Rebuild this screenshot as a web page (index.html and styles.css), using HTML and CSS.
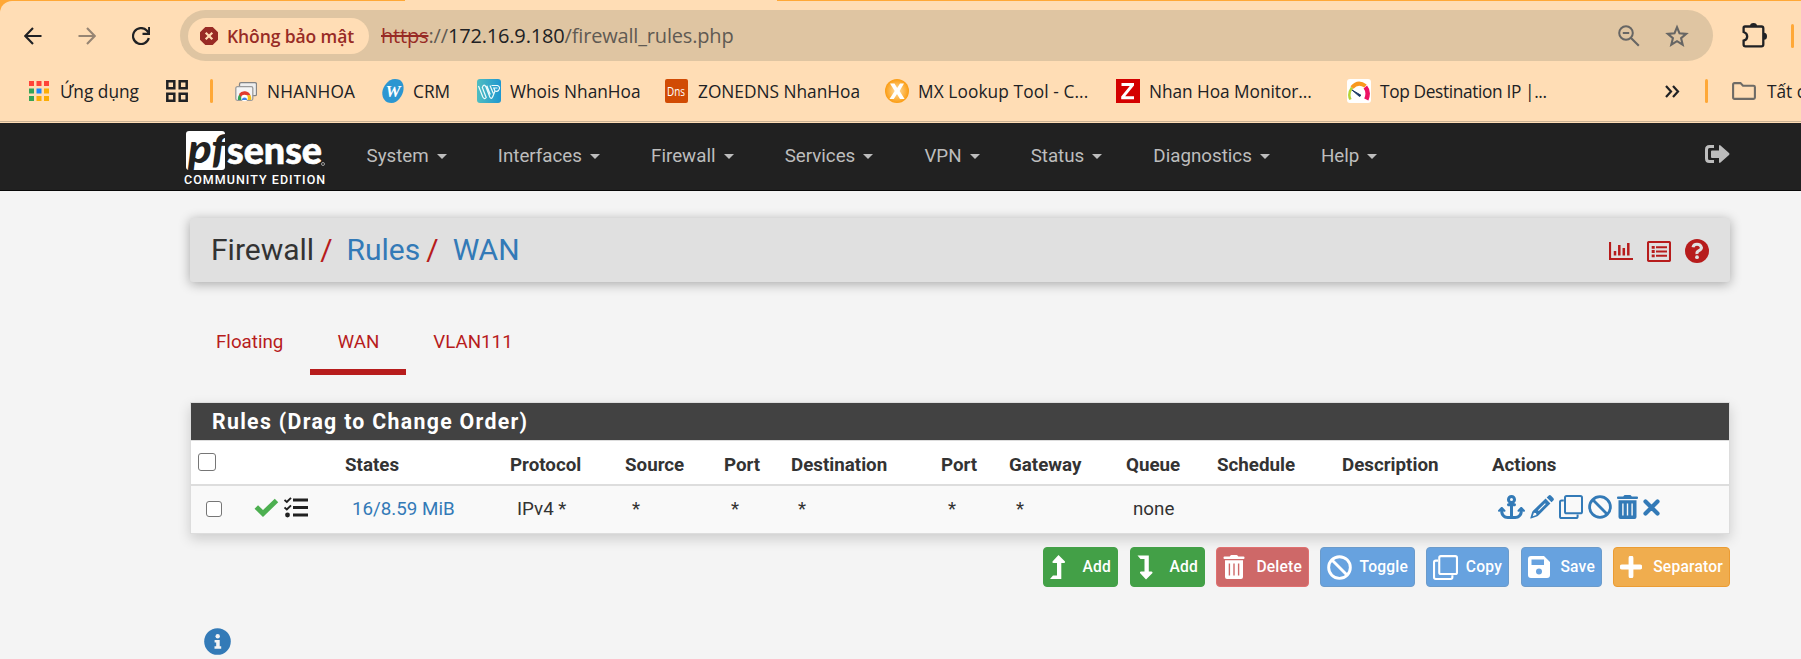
FILE: index.html
```html
<!DOCTYPE html>
<html lang="vi">
<head>
<meta charset="utf-8">
<title>Firewall: Rules: WAN</title>
<link rel="stylesheet" href="styles.css">
</head>
<body>
<svg class="defs" width="0" height="0" aria-hidden="true">
  <symbol id="ban" viewBox="0 0 24 24"><circle cx="12" cy="12" r="10.4" fill="none" stroke="currentColor" stroke-width="2.8"/><path d="M4.8 4.8 19.2 19.2" stroke="currentColor" stroke-width="2.8"/></symbol>
  <symbol id="clone" viewBox="0 0 24 24"><rect x="6" y="1.1" width="17" height="17.2" rx="1.6" fill="none" stroke="currentColor" stroke-width="2"/><path d="M4.8 5.4H2.6A1.6 1.6 0 0 0 1 7v14.4A1.6 1.6 0 0 0 2.600 23H17a1.600 1.600 0 0 0 1.600-1.600V19.500" fill="none" stroke="currentColor" stroke-width="2"/></symbol>
  <symbol id="trash" viewBox="0 0 21 24"><path fill="currentColor" fill-rule="evenodd" d="M1 1.500H6.200L7.200 .3Q7.500 0 8 0h5q.5 0 .8 .3l1 1.200H20q1 0 1 1v.5q0 1-1 1H1Q0 4 0 3v-.5q0-1 1-1zM1.500 5.300h18V22q0 2-2 2h-14q-2 0-2-2zM5.200 8.500v12h1.400v-12zM9.800 8.500v12h1.400v-12zM14.400 8.500v12h1.400v-12z"/></symbol>
</svg>
<div class="browser">
  <div class="tabstrip"><div class="active-tab"></div></div>
  <div class="toolbar">
    <svg class="nav-ico" viewBox="0 0 18 18"><path d="M17.500 9H1.500M9 1 1.300 9 9 17" fill="none" stroke="#202124" stroke-width="2.100"/></svg>
    <svg class="nav-ico" viewBox="0 0 18 18"><path d="M.5 9h16M9 1l7.700 8L9 17" fill="none" stroke="#978573" stroke-width="2.100"/></svg>
    <svg class="nav-ico" viewBox="0 0 18 18"><path d="M16.800 11A8 8 0 1 1 14.800 3.500L16.500 5.500" fill="none" stroke="#202124" stroke-width="2.200"/><path d="M17.200 0v6.800H10.500" fill="none" stroke="#202124" stroke-width="2.200"/></svg>
    <div class="omnibox">
      <div class="chip"><svg width="18" height="18" viewBox="0 0 18 18"><path d="M5.300 0h7.400L18 5.300v7.400L12.700 18H5.300L0 12.700V5.300z" fill="#982b25"/><path d="M5.700 5.700l6.600 6.600M12.300 5.700l-6.600 6.600" stroke="#ffdcb4" stroke-width="2.200"/></svg><span>Không bảo mật</span></div>
      <div class="url"><s>https</s>://<b>172.16.9.180</b>/firewall_rules.php</div>
      <svg class="o-zoom" viewBox="0 0 22 22"><circle cx="8" cy="8" r="6.800" fill="none" stroke="#676664" stroke-width="2"/><path d="M13 13l7.800 7.800M4.800 8h6.400" stroke="#676664" stroke-width="2.100"/></svg>
      <svg class="o-star" viewBox="0 0 24 24"><path d="M12 3.200 14.500 9.300 21.200 9.900 16.100 14.200 17.700 20.700 12 17.200 6.300 20.700 7.900 14.200 2.800 9.900 9.500 9.300z" fill="none" stroke="#676664" stroke-width="2.100"/></svg>
    </div>
    <svg class="puzzle" viewBox="0 0 25 25"><path d="M3 3.500H19.500Q21.300 3.500 21.300 5.300V21.600Q21.300 23.300 19.500 23.300H3.500Q1.600 23.300 1.600 21.500V17.700Q5.200 16.600 5.200 13.400T1.600 9V5Q1.600 3.500 3 3.500z" fill="none" stroke="#202124" stroke-width="2.300"/><path d="M8 3a3.500 3 0 0 1 7 0zM22 9.700a3 3.500 0 0 1 0 7z" fill="#202124"/></svg>
    <i class="sep"></i>
  </div>
  <div class="bookmarks">
    <div class="bm apps"><svg width="20" height="20" viewBox="0 0 20 20"><path fill="#ff4338" d="M0 0h5v5H0zM7.500 0h5v5h-5zM15 0h5v5h-5z"/><path fill="#34a457" d="M0 7.500h5v5H0zM0 15h5v5H0z"/><path fill="#1a86fa" d="M7.500 7.500h5v5h-5z"/><path fill="#fcad05" d="M15 7.500h5v5h-5zM7.500 15h5v5h-5zM15 15h5v5h-5z"/></svg><span>Ứng dụng</span></div>
    <div class="bm"><svg width="22" height="22" viewBox="0 0 22 22"><path d="M1.300 1.300h7v7h-7zM13.700 1.300h7v7h-7zM1.300 13.700h7v7h-7zM13.700 13.700h7v7h-7z" fill="none" stroke="#202124" stroke-width="2.500"/></svg></div>
    <div class="bm"><i class="sep"></i></div>
    <div class="bm t-nh"><svg width="22" height="22" viewBox="0 0 22 22"><rect x="4.500" y="2.700" width="17" height="13" rx="1.500" fill="#eee" stroke="#848484" stroke-width="1.300"/><rect x=".8" y="6.700" width="17" height="13.600" rx="1.500" fill="#f5f5f5" stroke="#9b9b9b" stroke-width="1.300"/><path d="M3 20a6.500 6.500 0 0 1 2-6l4.300 6z" fill="#33a354"/><path d="M4 14a6.500 6.500 0 0 1 11.500 1.500H9.500L8 20z" fill="#e23b2e"/><path d="M9.500 15.300H15.500A6.500 6.500 0 0 1 16 20H9z" fill="#fac116"/><circle cx="9.500" cy="18" r="3.300" fill="#fff"/><path d="M6.900 20a2.600 2.600 0 1 1 5.200 0z" fill="#3f82ee"/></svg><span>NHANHOA</span></div>
    <div class="bm t-crm"><svg width="22" height="24" viewBox="0 0 22 24"><path d="M13 0C20 0 22 5 21.500 10.500S16 24 9.500 24 0 19 .3 13.500 6 0 13 0z" fill="#2b96d1"/><text x="11" y="18" text-anchor="middle" class="w">W</text></svg><span>CRM</span></div>
    <div class="bm t-who"><svg width="24" height="24" viewBox="0 0 24 24"><defs><linearGradient id="g"><stop stop-color="#4fbdc0"/><stop offset="1" stop-color="#1f97d0"/></linearGradient></defs><rect width="24" height="24" rx="3" fill="url(#g)"/><path d="M1.500 7 5.800 18Q7.500 21 9.200 18.500L5.300 8.500Q7 4 9 8L12.800 18Q14.500 21 15.800 17.500L18 12M9.800 6.800 13.300 15.500M13 6.500 16.300 14.500M14.500 6.500H20.500Q24 8 21.500 11.500Q20 13 18 12L16.800 9H20.500" fill="none" stroke="#f0fbfc" stroke-width="1.200"/></svg><span>Whois NhanHoa</span></div>
    <div class="bm t-dns"><svg width="23" height="24" viewBox="0 0 23 24"><rect width="23" height="24" rx="2" fill="#d14b04"/><text x="2" y="16.500" textLength="18" lengthAdjust="spacingAndGlyphs" class="d">Dns</text></svg><span>ZONEDNS NhanHoa</span></div>
    <div class="bm t-mx"><svg width="24" height="24" viewBox="0 0 24 24"><defs><radialGradient id="o"><stop stop-color="#ffe0a8"/><stop offset="1" stop-color="#fb9c12"/></radialGradient></defs><circle cx="12" cy="12" r="12" fill="url(#o)"/><path d="M5 4.500h4.500l2.700 4.500 2.800-4.500h4L14.600 12l5 8H15l-3-5-3.200 5H4.500l5.200-8z" fill="#fff"/></svg><span>MX Lookup Tool - C...</span></div>
    <div class="bm t-nm"><svg width="24" height="24" viewBox="0 0 24 24"><path fill="#d40000" d="M0 0h24v24H0z"/><path d="M5.500 4H18v2.600L9.200 17.300H18V20.300H5.200V17.600L13.800 7H5.500z" fill="#fff"/></svg><span>Nhan Hoa Monitor...</span></div>
    <div class="bm t-top"><svg width="24" height="24" viewBox="0 0 24 24"><rect width="24" height="24" rx="3" fill="#fff"/><path d="M3.500 20.500Q.5 15 5 8.500" fill="none" stroke="#b4d335" stroke-width="2.500"/><path d="M5 8.500Q11 1.500 18.500 7" fill="none" stroke="#f9981d" stroke-width="4"/><path d="M18.300 8Q22.500 13 19.300 20.500" fill="none" stroke="#ed1164" stroke-width="4.500"/><path d="M5 11 12.500 17.500 14 16.300z" fill="#1b3a66" stroke="#1b3a66"/></svg><span>Top Destination IP |...</span></div>
    <div class="bm"><svg width="15" height="13" viewBox="0 0 15 13"><path d="M1 1l5 5.500L1 12M8 1l5 5.500L8 12" fill="none" stroke="#202124" stroke-width="2.200"/></svg></div>
    <div class="bm"><i class="sep"></i></div>
    <div class="bm t-all"><svg width="24" height="18" viewBox="0 0 24 18"><path d="M1.100 2.500Q1.100 1.100 2.500 1.100H8.500L11 3.700H21.500Q22.900 3.700 22.900 5V15.500Q22.900 16.900 21.500 16.900H2.500Q1.100 16.900 1.100 15.500z" fill="none" stroke="#6e6b66" stroke-width="2.100"/></svg><span>Tất cả</span></div>
  </div>
</div>
<nav class="navbar">
  <div class="brand">
    <svg width="142" height="42" viewBox="0 0 142 42"><defs><clipPath id="c"><rect x="2" y="2" width="39" height="39" rx="3"/></clipPath></defs><rect x="2" y="2" width="39" height="39" rx="3" fill="#fff"/><g clip-path="url(#c)"><text x="4" y="34" class="pf" textLength="38" lengthAdjust="spacingAndGlyphs">pf</text></g><text x="43" y="34.500" class="sense" textLength="95" lengthAdjust="spacingAndGlyphs">sense</text><circle cx="139" cy="35" r="1.500" fill="none" stroke="#bbb" stroke-width=".8"/></svg>
    <span>COMMUNITY EDITION</span>
  </div>
  <ul class="menu"><li>System</li><li>Interfaces</li><li>Firewall</li><li>Services</li><li>VPN</li><li>Status</li><li>Diagnostics</li><li>Help</li></ul>
  <svg class="logout" viewBox="0 0 25 18"><path d="M9 1.500H4.500Q1.500 1.500 1.500 4.500v9q0 3 3 3H9" fill="none" stroke="#bdbdbd" stroke-width="3"/><path d="M7 5.500H14V.8Q14.500-.4 15.500.4L24 8Q24.900 9 24 10L15.500 17.600Q14.500 18.400 14 17.200V13H7Q6 13 6 12V6.500Q6 5.500 7 5.500z" fill="#bdbdbd"/></svg>
</nav>
<main class="page">
  <header class="crumbs">
    <h1><span>Firewall</span><em>/</em><a>Rules</a><em>/</em><a>WAN</a></h1>
    <div class="tools">
      <svg width="24" height="18" viewBox="0 0 24 18"><path d="M1 0v17H24" fill="none" stroke="#b71c1c" stroke-width="2.200"/><path d="M6 13.500V9M10.300 13.500V3M14.800 13.500V6M19.300 13.500V1" stroke="#b71c1c" stroke-width="2.500"/></svg>
      <svg width="24" height="21" viewBox="0 0 24 21"><rect x="1" y="1" width="22" height="19" rx="1" fill="none" stroke="#b71c1c" stroke-width="2.100"/><path d="M9 6.300h11M9 10.500h11M9 14.800h11" stroke="#b71c1c" stroke-width="2"/><path d="M4.700 6.300h3M4.700 10.500h3M4.700 14.800h3" stroke="#b71c1c" stroke-width="2.800"/></svg>
      <svg width="24" height="24" viewBox="0 0 24 24"><circle cx="12" cy="12" r="12" fill="#b71c1c"/><path d="M8 8.300Q8.500 5.300 12 5.300T16.500 8.600Q16.500 10.500 14 11.700T12 15" fill="none" stroke="#e0e0e0" stroke-width="3"/><circle cx="12" cy="18.200" r="1.900" fill="#e0e0e0"/></svg>
    </div>
  </header>
  <ul class="tabs"><li>Floating</li><li class="on">WAN</li><li>VLAN111</li></ul>
  <section class="panel">
    <h2>Rules (Drag to Change Order)</h2>
    <table>
      <colgroup><col class="w49"><col class="w97"><col class="w165"><col class="w115"><col class="w99"><col class="w67"><col class="w150"><col class="w68"><col class="w117"><col class="w91"><col class="w125"><col class="w150"><col></colgroup>
      <thead><tr><th><i class="box big"></i></th><th></th><th>States</th><th>Protocol</th><th>Source</th><th>Port</th><th>Destination</th><th>Port</th><th>Gateway</th><th>Queue</th><th>Schedule</th><th>Description</th><th>Actions</th></tr></thead>
      <tbody><tr><td><i class="box"></i></td>
        <td><div class="icons marks"><svg width="25" height="19" viewBox="0 0 25 19"><path d="M2.300 9 9 15.500 22.500 2.500" fill="none" stroke="#4caf50" stroke-width="5"/></svg><svg width="24" height="21" viewBox="0 0 24 21"><path d="M9 3h15M9 10.500h15M9 18h15" stroke="#212121" stroke-width="3"/><path d="M.5 3l2.300 2L7 .8M.5 10.500l2.300 2L7 8.300" fill="none" stroke="#212121" stroke-width="1.900"/><circle cx="3.500" cy="18" r="2.400" fill="#212121"/></svg></div></td>
        <td><a>16/8.59 MiB</a></td><td>IPv4 *</td><td>*</td><td>*</td><td>*</td><td>*</td><td>*</td><td>none</td><td></td><td></td>
        <td><div class="icons acts">
          <svg width="27" height="24" viewBox="0 0 576 512"><path fill="currentColor" d="M320 96a32 32 0 1 1-64 0 32 32 0 1 1 64 0zm21.100 80C367 158.800 384 129.400 384 96c0-53-43-96-96-96s-96 43-96 96c0 33.400 17 62.800 42.900 80H224c-17.700 0-32 14.300-32 32s14.300 32 32 32h32V448H208c-53 0-96-43-96-96v-6.100l7 7c9.400 9.400 24.600 9.400 33.900 0s9.400-24.600 0-33.900L97 263c-9.400-9.400-24.600-9.400-33.900 0L7 319c-9.400 9.400-9.400 24.600 0 33.900s24.600 9.400 33.900 0l7-7V352c0 88.400 71.600 160 160 160h160c88.400 0 160-71.600 160-160v-6.100l7 7c9.400 9.400 24.600 9.400 33.900 0s9.400-24.600 0-33.900l-56-56c-9.400-9.400-24.600-9.400-33.900 0l-56 56c-9.400 9.400-9.400 24.600 0 33.900s24.600 9.400 33.900 0l7-7V352c0 53-43 96-96 96H320V240h32c17.700 0 32-14.300 32-32s-14.300-32-32-32H341.100z"/></svg>
          <svg width="24" height="24" viewBox="0 0 24 24"><path fill="currentColor" fill-rule="evenodd" d="M16.700 2.500 18.500.7q1.300-1.200 2.600 0l2.200 2.200q1.200 1.300 0 2.600l-1.800 1.800zM15.600 3.600 20.400 8.400 8.600 20.200Q7.500 21.300 6 21.700L1 23.500Q0 23.700.4 22.800L2 17.600Q2.400 16.300 3.500 15.300zM4 17.500 2.700 21.200 6.500 20 6 18H4.500zM15 8.200 8 15.200 8.800 16 15.800 9z"/></svg>
          <svg width="24" height="24"><use href="#clone"/></svg>
          <svg width="24" height="24"><use href="#ban"/></svg>
          <svg width="21" height="24"><use href="#trash"/></svg>
          <svg width="17" height="17" viewBox="0 0 17 17"><path d="M2.500 2.500l12 12M14.500 2.500l-12 12" stroke="currentColor" stroke-width="4.200" stroke-linecap="round"/></svg>
        </div></td></tr></tbody>
    </table>
  </section>
  <div class="buttons">
    <button class="green b1"><svg width="16" height="25" viewBox="0 0 16 25"><path d="M8.500 0 15 6.500Q15.300 8 14 8H11.300V24H0L3 20.500H7V8H3.500Q2 8 2.500 6.500z" fill="#fff"/></svg>Add</button>
    <button class="green b1"><svg width="16" height="25" viewBox="0 0 16 25"><path d="M9 24.500 15.500 18Q15.800 16.500 14.500 16.500H11.800V.5H.5L3.500 4H7.500V16.500H4Q2.500 16.500 3 18z" fill="#fff"/></svg>Add</button>
    <button class="red b3"><svg width="22" height="24"><use href="#trash"/></svg>Delete</button>
    <button class="blue b4"><svg width="25" height="25"><use href="#ban"/></svg>Toggle</button>
    <button class="blue b5"><svg width="25" height="25"><use href="#clone"/></svg>Copy</button>
    <button class="blue b6"><svg width="22" height="22" viewBox="0 0 22 22"><path fill="#fff" fill-rule="evenodd" d="M3 0H16L22 6V19Q22 22 19 22H3Q0 22 0 19V3Q0 0 3 0zM3.500 3.500V9H16V3.500zM11 12.500a3 3 0 1 0 0 6 3 3 0 0 0 0-6z"/></svg>Save</button>
    <button class="orange b7"><svg width="22" height="22" viewBox="0 0 22 22"><path d="M11 2v18M2 11h18" stroke="#fff" stroke-width="4.800" stroke-linecap="round"/></svg>Separator</button>
  </div>
  <svg class="info" width="27" height="27" viewBox="0 0 27 27"><circle cx="13.500" cy="13.500" r="13.300" fill="#337ab7"/><circle cx="13.700" cy="8.200" r="2.200" fill="#f4f4f4"/><path d="M10.600 12h5.100v6.300h1.500v2.500h-6.700v-2.500h1.700v-3.800h-1.600z" fill="#f4f4f4"/></svg>
</main>
</body>
</html>
```

FILE: styles.css
```css
* { box-sizing: border-box; }
body { margin: 0; width: 1801px; height: 659px; overflow: hidden; background: #f4f4f4; font-family: Roboto, sans-serif; font-size: 18.75px; color: #333; }
svg { display: block; flex: none; }
.defs { position: absolute; }
ul { list-style: none; margin: 0; padding: 0; }

/* browser chrome */
.browser { height: 123px; background: linear-gradient(#ffa837 0 12px, #ffddb5 12px); border-bottom: 1px solid #ffddb5; font-family: "Open Sans", "Noto Sans", sans-serif; }
.tabstrip { height: 1px; }
.active-tab { margin-left: 405px; width: 372px; height: 1px; background: #ffddb5; }
.toolbar { display: flex; align-items: center; height: 69px; padding: 0 0 0 24px; background: #ffddb5; border-radius: 12px 0 0 0; }
.nav-ico { width: 18px; height: 18px; margin-right: 36px; }
.omnibox { display: flex; align-items: center; width: 1533px; height: 51px; margin-left: -6px; border-radius: 26px; background: #dfc5a2; padding-left: 8px; }
.chip { display: flex; align-items: center; gap: 9px; width: 181px; height: 36px; padding-left: 12px; border-radius: 18px; background: #ffddb5; color: #982b25; font-size: 17.5px; font-weight: 600; white-space: nowrap; letter-spacing: -.1px; }
.url { width: 1237px; margin-left: 12px; font-size: 20px; color: #5f5a53; white-space: nowrap; letter-spacing: -.17px; }
.url b { font-weight: 400; color: #202124; }
.url s { color: #982b25; }
.o-zoom { width: 22px; height: 22px; }
.o-star { width: 24px; height: 24px; margin-left: 25px; }
.puzzle { width: 25px; height: 25px; margin-left: 29px; }
.sep { width: 3px; height: 24px; border-radius: 2px; background: #ffa837; }
.toolbar .sep { margin-left: 24px; }
.bookmarks { display: grid; grid-template-columns: 137px 44px 25px 147px 95px 188px 220px 231px 231px 318px 40px 27px 1fr; align-items: center; height: 52px; padding-left: 29px; background: #ffddb5; border-bottom: 1px solid #c9b193; padding-bottom: 9px; overflow: hidden; }
.bm { display: flex; align-items: center; gap: 9px; white-space: nowrap; font-size: 17.3px; color: #202124; min-width: 0; }
.apps, .t-all { gap: 11px; }
.t-nh, .t-dns { gap: 10px; }
.t-nh { letter-spacing: .2px; }
.t-mx { letter-spacing: .1px; }
.t-nm { letter-spacing: -.05px; }
.t-top { letter-spacing: -.36px; }
.w { font: italic bold 17px "Liberation Serif", serif; fill: #fff; }
.d { font: 13px "Open Sans", sans-serif; fill: #fff; }

/* product navigation */
.navbar { display: flex; height: 68px; background: #212121; border-bottom: 1px solid #080808; padding-left: 184px; color: #bdbdbd; }
.brand { width: 182.5px; padding-top: 6px; color: #fff; }
.brand span { display: block; margin-top: 1px; font-size: 12.500px; font-weight: 500; line-height: 15px; letter-spacing: 1.030px; white-space: nowrap; }
.pf { font: italic 900 40px Lato, sans-serif; fill: #212121; }
.sense { font: 900 37px Lato, sans-serif; fill: #fff; stroke: #fff; stroke-width: .6px; }
.menu { display: flex; width: 1338.5px; gap: 51.1px; line-height: 65px; }
.menu li { display: flex; align-items: center; }
.menu li::after { content: ""; margin-left: 8px; border: 5px solid transparent; border-top-color: #bdbdbd; border-bottom: 0; }
.logout { width: 25px; height: 18px; margin-top: 22px; }

.page { padding: 27px 71px 0 190px; }
.crumbs { display: flex; justify-content: space-between; align-items: center; height: 64px; padding: 0 21px; background: #e0e0e0; border-radius: 3px; box-shadow: 0 2px 12px rgba(0,0,0,.32); }
h1 { margin: 0; font-size: 30px; font-weight: 400; line-height: 64px; white-space: nowrap; }
h1 a, td a { color: #337ab7; }
h1 em { font-style: normal; color: #b71c1c; margin: 0 14px 0 6px; }
.tools { display: flex; align-items: center; gap: 14px; padding-top: 2px; }
.tabs { display: flex; margin-top: 27px; height: 66px; color: #b71c1c; line-height: 66px; }
.tabs li { padding: 0 27px; height: 66px; }
.tabs li:first-child { padding-left: 26px; }
.tabs .on { border-bottom: 6px solid #b71c1c; }
.panel { margin-top: 27px; border: 1px solid #ddd; box-shadow: 0 5px 12px rgba(0,0,0,.16); background: #fff; }
h2 { margin: 0; height: 38px; padding-left: 21px; background: #424242; border-bottom: 1px solid #ddd; color: #fff; font-size: 21.300px; font-weight: 700; line-height: 38px; letter-spacing: 1.300px; }
table { width: 1538px; table-layout: fixed; border-collapse: separate; border-spacing: 0; }
th { height: 45px; padding: 5px 0 0 8px; border-bottom: 2px solid #ddd; text-align: left; font-weight: 700; }
td { height: 47px; padding: 0 0 2px 15px; background: #f9f9f9; white-space: nowrap; }
.w49 { width: 49px; } .w97 { width: 97px; } .w165 { width: 165px; } .w115 { width: 115px; } .w99 { width: 99px; } .w67 { width: 67px; } .w150 { width: 150px; } .w68 { width: 68px; } .w117 { width: 117px; } .w91 { width: 91px; } .w125 { width: 125px; }
.box { display: block; width: 16px; height: 16px; border: 1.500px solid #767676; border-radius: 3px; background: #fff; }
.big { width: 18px; height: 18px; margin: -7px 0 0 -1px; }
.icons { display: flex; align-items: center; }
.marks { gap: 5px; margin-left: -1px; margin-top: -3px; }
.acts { color: #337ab7; gap: 5px; margin-top: -3px; margin-left: -1px; }

.buttons { display: flex; justify-content: flex-end; margin-top: 13px; height: 40px; }
button { display: flex; align-items: center; justify-content: space-between; height: 40px; padding: 0 6px; border: 1px solid; border-radius: 4px; color: #fff; font: 500 15.600px Roboto, sans-serif; letter-spacing: .2px; }
.green { background: #43a047; border-color: #43a047; }
.red { background: #ce6868; border-color: #e07070; }
.blue { background: #67a2df; border-color: #6b9bcb; }
.orange { background: #f0ad4e; border-color: #eb9c33; }
.b1 { width: 75px; margin-right: 12px; }
.b1 + .b1 { margin-right: 11px; }
.b3 { width: 93px; margin-right: 11px; }
.b4 { width: 95px; margin-right: 11px; }
.b5 { width: 83px; margin-right: 12px; }
.b6 { width: 81px; margin-right: 11px; }
.b7 { width: 117px; }
.info { margin: 41px 0 0 14px; }
```
